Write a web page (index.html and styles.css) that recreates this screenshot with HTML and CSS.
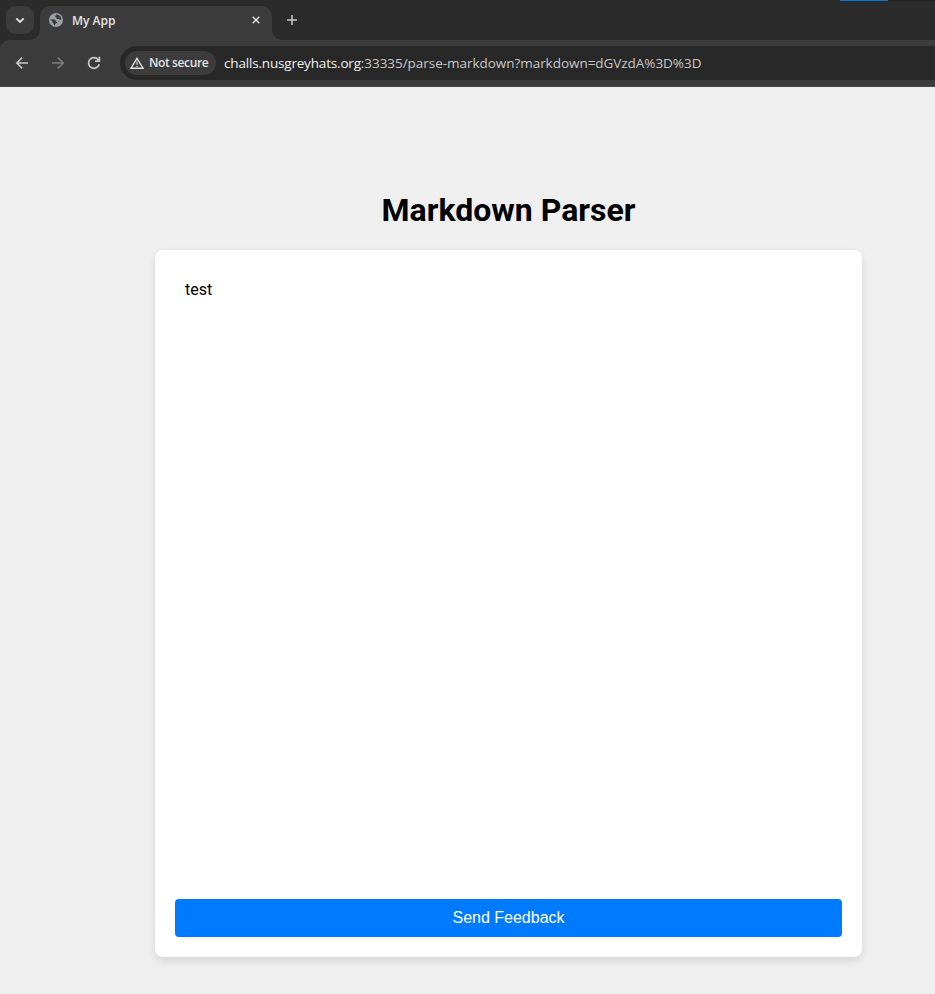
FILE: index.html
```html
<!DOCTYPE html>
<html lang="en">
<head>
<meta charset="utf-8">
<title>My App</title>
<link rel="stylesheet" href="styles.css">
</head>
<body>
<header class="browser">
  <div class="tabstrip">
    <span class="window-accent"></span>
    <button class="tab-search" aria-label="Search tabs">
      <svg width="28" height="28" viewBox="0 0 28 28"><path d="M10.3 12.3 14 16l3.7-3.7" fill="none" stroke="#e3e3e3" stroke-width="1.8"/></svg>
    </button>
    <div class="tab">
      <svg class="globe" width="14" height="14" viewBox="0 0 14 14"><circle cx="7" cy="7" r="7" fill="#9aa0a6"/><path d="M8.3 1.4C6.8 1.7 6.1 2.5 6.3 3.5 6.5 4.3 7.5 4.1 7.4 5 7.3 5.8 8.2 6.2 9.1 6 10.1 5.8 10.3 6.7 11.2 6.8L12.5 6.5C12.3 4 10.8 2 8.3 1.4ZM1.4 6.4C3.2 6.1 5.5 6.3 6.4 7.1 7.1 7.8 6.7 8.5 7.6 8.8 8.6 9.2 8.4 10.3 7.2 10.4 6 10.5 6.2 11.4 5.7 12.4L4.8 12.1C5.2 11.1 4.7 10.6 4.1 10.2 3.1 9.4 3.8 8.4 2.8 7.9Z" fill="#3c3c3c"/></svg>
      <span class="tab-title">My App</span>
      <svg class="close" width="8" height="8" viewBox="0 0 8 8"><path d="m.7.7 6.6 6.6M7.3.7.7 7.3" stroke="#e3e3e3" stroke-width="1.5"/></svg>
    </div>
    <svg class="new-tab" width="10" height="10" viewBox="0 0 10 10"><path d="M5 0v10M0 5h10" stroke="#c7c7c7" stroke-width="1.5"/></svg>
  </div>
  <div class="toolbar">
    <svg class="nav" width="16" height="16" viewBox="0 0 16 16"><path d="M14 8H3M8.2 2.6 2.8 8l5.4 5.4" fill="none" stroke="#c7c7c7" stroke-width="1.6"/></svg>
    <svg class="nav" width="16" height="16" viewBox="0 0 16 16"><path d="M2 8h11M7.8 2.6 13.2 8l-5.4 5.4" fill="none" stroke="#7c7c7c" stroke-width="1.6"/></svg>
    <svg class="nav" width="16" height="16" viewBox="0 0 16 16"><path d="M13.2 9.2A5.4 5.4 0 1 1 12.2 4.6L13 5.7M13.4 1.8V6.1H9" fill="none" stroke="#c7c7c7" stroke-width="1.7"/></svg>
    <div class="address">
      <div class="security">
        <svg width="14" height="12" viewBox="0 0 14 12"><path d="M7 1.3 13 11.2H1Z" fill="none" stroke="#e3e3e3" stroke-width="1.4"/><path d="M7 4.5v3.2M7 8.7V10" stroke="#c7c7c7" stroke-width="1.3"/></svg>
        <span class="security-label">Not secure</span>
      </div>
      <div class="url"><span class="host">challs.nusgreyhats.org</span><span class="path">:33335/parse-markdown?markdown=dGVzdA%3D%3D</span></div>
    </div>
  </div>
</header>
<main class="page">
  <h1>Markdown Parser</h1>
  <section class="card">
    <div class="content">test</div>
    <button class="feedback">Send Feedback</button>
  </section>
</main>
</body>
</html>
```
FILE: styles.css
```css
* { box-sizing: border-box; }
body { margin: 0; height: 994px; overflow: hidden; background: #efefef; color: #000; font-family: Roboto, sans-serif; }
button { border: 0; padding: 0; }
.browser { height: 87px; background: #2b2b2b; font-family: "Open Sans", sans-serif; }
.tabstrip { position: relative; display: flex; height: 40px; padding: 6px 0 0 6px; }
.window-accent { position: absolute; top: 0; right: 0; width: 95px; height: 1px; background: linear-gradient(90deg, #0078d4 48px, #1f1f1f 48px); }
.tab-search { width: 28px; height: 28px; border-radius: 9px; background: #3c3c3c; }
.tab-search svg { display: block; }
.tab { position: relative; display: flex; align-items: center; width: 232px; height: 34px; margin-left: 6px; padding: 0 12px 6px 9px; border-radius: 10px 10px 0 0; background: #3c3c3c; }
.tab::before, .tab::after { content: ""; position: absolute; bottom: 0; width: 10px; height: 10px; }
.tab::before { left: -10px; background: radial-gradient(circle at 0 0, transparent 9.5px, #3c3c3c 10px); }
.tab::after { right: -10px; background: radial-gradient(circle at 100% 0, transparent 9.5px, #3c3c3c 10px); }
.tab-title { margin-left: 9px; padding-top: 2px; color: #e3e3e3; font-size: 12px; font-weight: 600; line-height: 16px; white-space: nowrap; }
.close { margin-left: auto; }
.new-tab { margin: 9px 0 0 15px; }
.toolbar { display: flex; align-items: center; height: 47px; padding: 0 0 1px 14px; border-bottom: 1px solid #4a4a4a; border-radius: 9px 0 0 0; background: #3c3c3c; }
.nav { flex: none; margin-right: 20px; }
.address { display: flex; align-items: center; flex: 1; height: 34px; margin-left: -2px; padding-left: 5px; border-radius: 17px 0 0 17px; background: #282828; }
.security { display: flex; align-items: center; width: 91px; height: 24px; padding-left: 5px; border-radius: 12px; background: #3c3c3c; }
.security-label { margin-left: 5px; color: #e3e3e3; font-size: 12px; font-weight: 600; line-height: 16px; letter-spacing: -.38px; white-space: nowrap; }
.url { margin-left: 8px; color: #c7c7c7; font-size: 13.5px; line-height: 20px; white-space: nowrap; }
.host { color: #f0f0f0; letter-spacing: -.18px; }
.path { letter-spacing: -.04px; }
.page { width: 707px; margin: 0 0 0 155px; padding-top: 104px; }
h1 { margin: 0 0 21px; font-size: 32px; font-weight: 700; line-height: 38px; text-align: center; }
.card { display: flex; flex-direction: column; height: 707px; padding: 20px; border-radius: 8px; background: #fff; box-shadow: 0 4px 8px rgba(0, 0, 0, .1); }
.content { flex: 1; padding: 10px; font-size: 16px; line-height: 19px; }
.feedback { height: 38px; border-radius: 4px; background: #007bff; color: #fff; font-family: "Liberation Sans", Arial, sans-serif; font-size: 16px; }
```
